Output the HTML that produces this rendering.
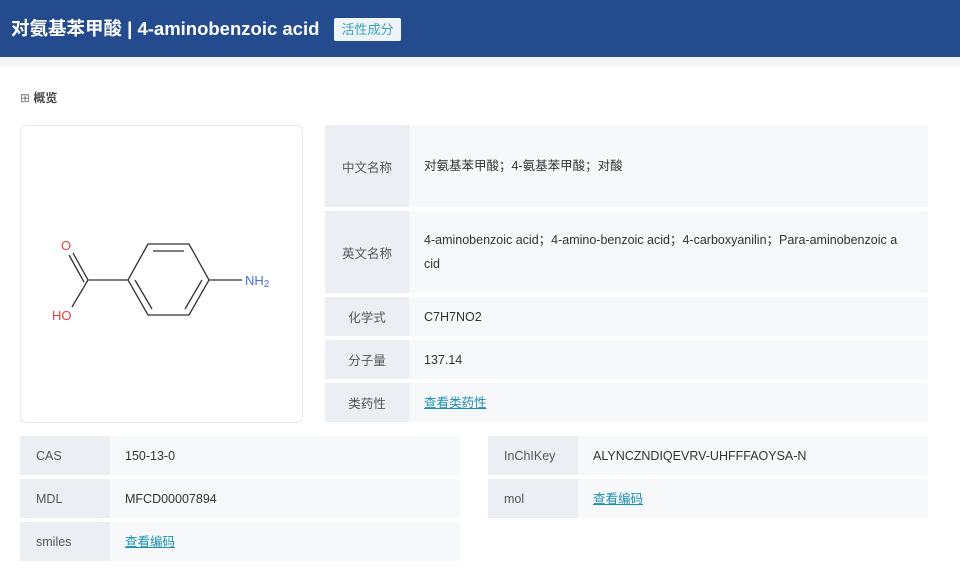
<!DOCTYPE html><html><head><meta charset="utf-8"><style>
body{margin:0;width:960px;height:568px;overflow:hidden;background:#fff;font-family:"Liberation Sans","Noto Sans CJK SC",sans-serif;color:#333}
.hd{position:absolute;left:0;top:0;width:960px;height:57px;background:#254b8f}
.hd h1{position:absolute;left:11px;top:17px;margin:0;font-size:18.5px;color:#fff;font-weight:bold;line-height:24px}
.tag{position:absolute;left:334px;top:18px;width:67px;height:23px;background:#eef4f7;border-radius:2px;color:#3aa0b8;font-size:13px;line-height:23px;text-align:center}
.strip{position:absolute;top:57px;left:0;width:960px;height:9px;background:#f2f5f7}
.ov{position:absolute;left:20px;top:89px;font-size:12px;font-weight:bold;color:#444}
.img{position:absolute;left:20px;top:125px;width:281px;height:296px;border:1px solid #e5e8ec;border-radius:6px}
.row{position:absolute;background:#f6f8fa;border-radius:3px;font-size:12.5px}
.row .l{position:absolute;left:0;top:0;bottom:0;background:#ebeff3;color:#555;display:flex;align-items:center;justify-content:center}
.row .v{position:absolute;top:0;bottom:0;display:flex;align-items:center;color:#333;line-height:24px}
a{color:#1a8fb0;text-decoration:underline}
</style></head><body>
<div class="hd"><h1>对氨基苯甲酸 | 4-aminobenzoic acid</h1><div class="tag">活性成分</div></div>
<div class="strip"></div>
<div class="ov"><span style="color:#777;font-weight:normal">⊞</span> 概览</div>
<div class="img"></div>
<svg style="position:absolute;left:0;top:0" width="320" height="430">
<g stroke="#333" stroke-width="1.3" fill="none">
<path d="M128 280 L148 244 L189 244 L209 280 L189 315 L148 315 Z"/>
<path d="M153 251 L184 251 M202 280 L185 309 M135 280 L152 309"/>
<path d="M128 280 L88 280 L73 253 M84 282 L69 255 M88 280 L72 307 M209 280 L242 280"/>
</g>
<text x="61" y="250" fill="#e8423c" font-size="13" font-family="Liberation Sans">O</text>
<text x="52" y="320" fill="#e8423c" font-size="13" font-family="Liberation Sans">HO</text>
<text x="245" y="285" fill="#4a6ee0" font-size="13" font-family="Liberation Sans">NH<tspan font-size="10" dy="2">2</tspan></text>
</svg>
<div class="row" style="left:325px;top:125px;width:603px;height:82px"><div class="l" style="width:84px">中文名称</div><div class="v" style="left:99px">对氨基苯甲酸；4-氨基苯甲酸；对酸</div></div>
<div class="row" style="left:325px;top:211px;width:603px;height:82px"><div class="l" style="width:84px">英文名称</div><div class="v" style="left:99px;right:12px">4-aminobenzoic acid；4-amino-benzoic acid；4-carboxyanilin；Para-aminobenzoic a<br>cid</div></div>
<div class="row" style="left:325px;top:297px;width:603px;height:39px"><div class="l" style="width:84px">化学式</div><div class="v" style="left:99px">C7H7NO2</div></div>
<div class="row" style="left:325px;top:340px;width:603px;height:39px"><div class="l" style="width:84px">分子量</div><div class="v" style="left:99px">137.14</div></div>
<div class="row" style="left:325px;top:383px;width:603px;height:39px"><div class="l" style="width:84px">类药性</div><div class="v" style="left:99px"><a>查看类药性</a></div></div>
<div class="row" style="left:20px;top:436px;width:440px;height:39px"><div class="l" style="width:90px;justify-content:flex-start;padding-left:16px;box-sizing:border-box">CAS</div><div class="v" style="left:105px">150-13-0</div></div>
<div class="row" style="left:20px;top:479px;width:440px;height:39px"><div class="l" style="width:90px;justify-content:flex-start;padding-left:16px;box-sizing:border-box">MDL</div><div class="v" style="left:105px">MFCD00007894</div></div>
<div class="row" style="left:20px;top:522px;width:440px;height:39px"><div class="l" style="width:90px;justify-content:flex-start;padding-left:16px;box-sizing:border-box">smiles</div><div class="v" style="left:105px"><a>查看编码</a></div></div>
<div class="row" style="left:488px;top:436px;width:440px;height:39px"><div class="l" style="width:90px;justify-content:flex-start;padding-left:16px;box-sizing:border-box">InChIKey</div><div class="v" style="left:105px">ALYNCZNDIQEVRV-UHFFFAOYSA-N</div></div>
<div class="row" style="left:488px;top:479px;width:440px;height:39px"><div class="l" style="width:90px;justify-content:flex-start;padding-left:16px;box-sizing:border-box">mol</div><div class="v" style="left:105px"><a>查看编码</a></div></div>
</body></html>
